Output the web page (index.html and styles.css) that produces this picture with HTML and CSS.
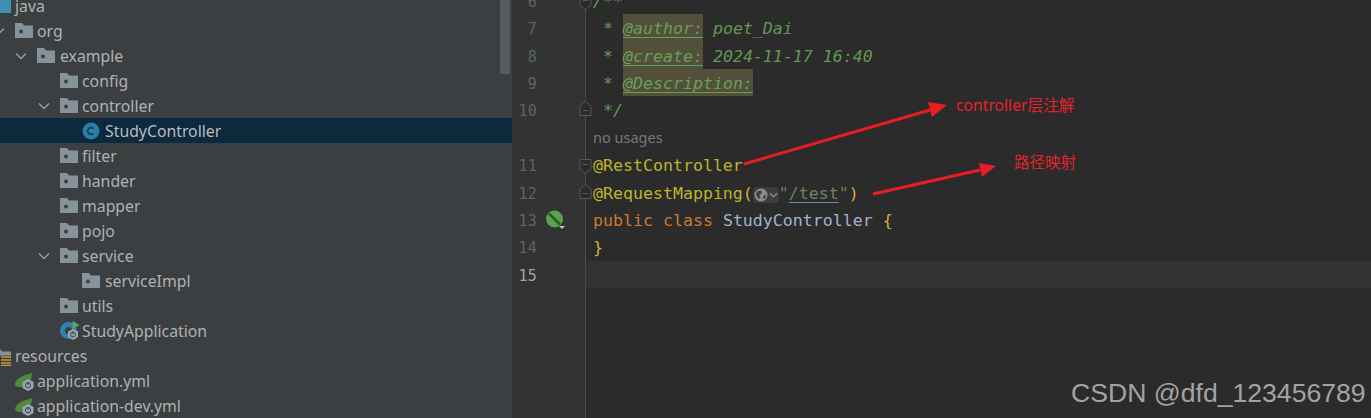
FILE: index.html
```html
<!DOCTYPE html>
<html lang="zh">
<head>
<meta charset="utf-8">
<title>StudyController</title>
<link rel="stylesheet" href="styles.css">
</head>
<body>
<svg class="defs" width="0" height="0">
  <symbol id="folder" viewBox="0 0 18 15">
    <path d="M0 0H7L9 2.5H18V15H0Z" fill="#87939a"/>
    <circle cx="6" cy="8.5" r="2" fill="#3c3f41"/>
  </symbol>
  <symbol id="chev" viewBox="0 0 12 8">
    <path d="M1 1.5L6 6.5L11 1.5" fill="none" stroke="#9da0a2" stroke-width="1.3"/>
  </symbol>
  <symbol id="cls" viewBox="0 0 18 18">
    <circle cx="9" cy="9" r="8.5" fill="#2a7ea6"/>
    <path d="M11.5 6.6A3.4 3.4 0 1 0 11.5 11.4" fill="none" stroke="#0f3f58" stroke-width="1.6"/>
  </symbol>
  <symbol id="app" viewBox="0 0 20 20">
    <circle cx="8.5" cy="9.5" r="8.5" fill="#2f83ab"/>
    <circle cx="8.5" cy="9.5" r="3.6" fill="#3c3f41"/>
    <path d="M12.5 0L19.5 4L12.5 8Z" fill="#59a869"/>
    <path d="M13 8L18 10.5V16L13 19L8 16V10.5Z" fill="#9aa7b0"/>
    <circle cx="13" cy="13.5" r="2.4" fill="none" stroke="#3c3f41" stroke-width="1"/>
    <path d="M13 10.5V13.5" stroke="#3c3f41" stroke-width="1"/>
  </symbol>
  <symbol id="yml" viewBox="0 0 19 18">
    <path d="M0 12C0 6 6 3 17 0C17 6 14 14 6 14C3 14 1 14 0 12Z" fill="#4f8a3c"/>
    <path d="M13 6L18.5 9V15L13 18L7.5 15V9Z" fill="#9aa7b0"/>
    <circle cx="13" cy="12.2" r="2.6" fill="none" stroke="#3c3f41" stroke-width="1"/>
    <path d="M13 9V12.2" stroke="#3c3f41" stroke-width="1"/>
  </symbol>
  <symbol id="res" viewBox="0 0 18 17">
    <path d="M0 0H7L9 2.5H18V12H0Z" fill="#87939a"/>
    <path d="M7 6.5H18V17H7Z" fill="#3c3f41"/>
    <path d="M8 8H18M8 11H18M8 14H18M8 16.5H18" stroke="#c79a3c" stroke-width="1.6"/>
  </symbol>
  <symbol id="java" viewBox="0 0 18 15">
    <path d="M0 0H7L9 2H18V15H0Z" fill="#3f8fb3"/>
  </symbol>
  <symbol id="foldopen" viewBox="0 0 13 15">
    <path d="M1 14.5V5L6.5 .5L12 5V14.5ZM3.5 9.5H9.5" fill="#2b2b2b" stroke="#555759"/>
  </symbol>
  <symbol id="foldclose" viewBox="0 0 13 15">
    <path d="M1 .5V10L6.5 14.5L12 10V.5ZM3.5 5.5H9.5" fill="#2b2b2b" stroke="#555759"/>
  </symbol>
</svg>

<div class="app">
  <aside class="sidebar">
    <div class="tree">
      <div class="node"><div class="in l0"><span class="ch"></span><svg class="ic"><use href="#java"/></svg><span class="lb">java</span></div></div>
      <div class="node"><div class="in l1"><svg class="ch"><use href="#chev"/></svg><svg class="ic"><use href="#folder"/></svg><span class="lb">org</span></div></div>
      <div class="node"><div class="in l2"><svg class="ch"><use href="#chev"/></svg><svg class="ic"><use href="#folder"/></svg><span class="lb">example</span></div></div>
      <div class="node"><div class="in l3"><span class="ch"></span><svg class="ic"><use href="#folder"/></svg><span class="lb">config</span></div></div>
      <div class="node"><div class="in l3"><svg class="ch"><use href="#chev"/></svg><svg class="ic"><use href="#folder"/></svg><span class="lb">controller</span></div></div>
      <div class="node selected"><div class="in l4"><span class="ch"></span><svg class="ic ic-c"><use href="#cls"/></svg><span class="lb">StudyController</span></div></div>
      <div class="node"><div class="in l3"><span class="ch"></span><svg class="ic"><use href="#folder"/></svg><span class="lb">filter</span></div></div>
      <div class="node"><div class="in l3"><span class="ch"></span><svg class="ic"><use href="#folder"/></svg><span class="lb">hander</span></div></div>
      <div class="node"><div class="in l3"><span class="ch"></span><svg class="ic"><use href="#folder"/></svg><span class="lb">mapper</span></div></div>
      <div class="node"><div class="in l3"><span class="ch"></span><svg class="ic"><use href="#folder"/></svg><span class="lb">pojo</span></div></div>
      <div class="node"><div class="in l3"><svg class="ch"><use href="#chev"/></svg><svg class="ic"><use href="#folder"/></svg><span class="lb">service</span></div></div>
      <div class="node"><div class="in l4"><span class="ch"></span><svg class="ic"><use href="#folder"/></svg><span class="lb">serviceImpl</span></div></div>
      <div class="node"><div class="in l3"><span class="ch"></span><svg class="ic"><use href="#folder"/></svg><span class="lb">utils</span></div></div>
      <div class="node"><div class="in l3"><span class="ch"></span><svg class="ic ic-app"><use href="#app"/></svg><span class="lb">StudyApplication</span></div></div>
      <div class="node"><div class="in l0"><span class="ch"></span><svg class="ic ic-res"><use href="#res"/></svg><span class="lb">resources</span></div></div>
      <div class="node"><div class="in l1"><span class="ch"></span><svg class="ic ic-yml"><use href="#yml"/></svg><span class="lb">application.yml</span></div></div>
      <div class="node"><div class="in l1"><span class="ch"></span><svg class="ic ic-yml"><use href="#yml"/></svg><span class="lb">application-dev.yml</span></div></div>
    </div>
    <div class="scrollthumb"></div>
  </aside>

  <main class="editor">
    <div class="lines">
      <div class="row"><div class="gut">6<svg class="fold fold-c"><use href="#foldclose"/></svg></div><div class="code cm">/**</div></div>
      <div class="row"><div class="gut">7</div><div class="code cm"> * <span class="tag">@author:</span> poet_Dai</div></div>
      <div class="row"><div class="gut">8</div><div class="code cm"> * <span class="tag">@create:</span> 2024-11-17 16:40</div></div>
      <div class="row"><div class="gut">9</div><div class="code cm"> * <span class="tag">@Description:</span></div></div>
      <div class="row"><div class="gut">10<svg class="fold fold-o"><use href="#foldopen"/></svg></div><div class="code cm"> */</div></div>
      <div class="row"><div class="gut"></div><div class="code hint">no usages</div></div>
      <div class="row"><div class="gut">11<svg class="fold fold-c"><use href="#foldclose"/></svg></div><div class="code"><span class="ann">@RestController</span></div></div>
      <div class="row"><div class="gut">12<svg class="fold fold-o"><use href="#foldopen"/></svg></div><div class="code"><span class="ann">@RequestMapping</span><span class="br">(</span><span class="inlay"><svg class="globe" viewBox="0 0 14 14"><circle cx="7" cy="7" r="6.5" fill="#8a8f94"/><path d="M3 3.5L7 2.5L8 5L5.5 7L6.5 10L4.5 11L2 7ZM9.5 7.5L12 7L11 10.5L9 11Z" fill="#3d3f40"/></svg><svg class="mini" viewBox="0 0 10 6"><path d="M1 1L5 5L9 1" fill="none" stroke="#8a8f94" stroke-width="1.4"/></svg></span><span class="str">"<span class="url">/test</span>"</span><span class="br">)</span></div></div>
      <div class="row"><div class="gut">13<svg class="bean" viewBox="0 0 20 20"><circle cx="9.5" cy="9" r="8.5" fill="#5aa34c"/><path d="M4 3.5L15 14.5" stroke="#2e5f28" stroke-width="2.6"/><path d="M14 16H20L17 19Z" fill="#c5c8ca"/></svg></div><div class="code"><span class="kw">public class</span> <span class="ty">StudyController</span> <span class="br">{</span></div></div>
      <div class="row"><div class="gut">14</div><div class="code"><span class="br">}</span></div></div>
      <div class="row current"><div class="gut">15</div><div class="code"></div></div>
      <div class="row filler"><div class="gut"></div><div class="code"></div></div>
    </div>
  </main>

  <svg class="arrows" viewBox="0 0 1371 418">
    <path d="M744 164L930 110" stroke="#ea1c24" stroke-width="3" fill="none"/>
    <path d="M947 105L928 102L932 117Z" fill="#ea1c24"/>
    <path d="M873 194L980 170" stroke="#ea1c24" stroke-width="3" fill="none"/>
    <path d="M996 166L979 163L982 177Z" fill="#ea1c24"/>
  </svg>
  <div class="note note-a">controller层注解</div>
  <div class="note note-b">路径映射</div>
  <div class="mark">CSDN @dfd_123456789</div>
</div>
</body>
</html>
```

FILE: styles.css
```css
* { box-sizing: border-box; }
html, body { margin: 0; padding: 0; background: #2b2b2b; }
.defs { position: absolute; }
.app {
  position: relative;
  display: flex;
  width: 1371px;
  height: 418px;
  overflow: hidden;
}
.sidebar {
  position: relative;
  flex: 0 0 512px;
  background: #3c3f41;
  overflow: hidden;
}
.tree { margin-top: -7px; }
.node {
  height: 25px;
  color: #afb1b3;
  font: 15.8px/25px "Noto Sans", sans-serif;
  white-space: nowrap;
}
.node.selected { background: #0d293e; color: #b8bcbe; }
.in { display: flex; align-items: center; height: 25px; }
.lb { padding-top: 2px; }
.l0 { margin-left: -29px; }
.l1 { margin-left: -7px; }
.l2 { margin-left: 15px; }
.l3 { margin-left: 38px; }
.l4 { margin-left: 60px; }
.ch { flex: 0 0 12px; width: 12px; height: 8px; margin-right: 10px; }
.ic { flex: 0 0 18px; width: 18px; height: 15px; margin-right: 4px; }
.l2 .ic, .l4 .ic { margin-right: 5px; }
.ic-c { height: 18px; }
.ic-app { width: 20px; flex-basis: 20px; height: 20px; margin-right: 2px; }
.ic-res { height: 17px; margin-top: 3px; }
.ic-yml { width: 19px; flex-basis: 19px; height: 18px; margin-right: 3px; margin-top: 2px; }
.scrollthumb {
  position: absolute;
  top: 0;
  left: 500px;
  width: 10px;
  height: 74px;
  background: #595b5d;
}

.editor { flex: 1; min-width: 0; }
.lines {
  display: flex;
  flex-direction: column;
  height: 431.2px;
  margin-top: -13.2px;
}
.row {
  display: grid;
  grid-template-columns: 74px 1fr;
  grid-template-rows: 27.4px;
  flex: 0 0 27.4px;
  height: 27.4px;
}
.row.filler { flex: 1; height: auto; grid-template-rows: 1fr; }
.gut {
  position: relative;
  padding-right: 48px;
  background: #313335;
  border-right: 1px solid #484a4b;
  color: #5f6365;
  text-align: right;
  font: 15px/30px "DejaVu Sans Mono", monospace;
  letter-spacing: .2px;
}
.current .gut { color: #a4a3a3; }
.current .code { background: #323232; }
.code {
  padding-left: 7px;
  color: #a9b7c6;
  font: 16.6px/30px "DejaVu Sans Mono", monospace;
  white-space: pre;
}
.cm { color: #629755; font-style: italic; }
.tag {
  display: inline-block;
  height: 27.4px;
  color: #689f5b;
  background: #52503a;
  text-decoration: underline;
  text-underline-offset: 3px;
}
.hint {
  color: #787878;
  font: 14.5px/27.4px "Noto Sans", sans-serif;
}
.ann { color: #bbb529; }
.br { color: #d7ae3f; }
.kw { color: #cc7832; }
.ty { color: #a0b4cc; }
.str { color: #6a8759; }
.url {
  text-decoration: underline;
  text-decoration-color: #6a8aa8;
  text-underline-offset: 3px;
}
.inlay {
  display: inline-flex;
  align-items: center;
  justify-content: center;
  width: 26px;
  height: 16px;
  vertical-align: -3px;
  background: #3b3d3e;
  border-radius: 4px;
}
.globe { width: 14px; height: 14px; margin-right: 1px; }
.mini { width: 9px; height: 6px; }
.fold {
  position: absolute;
  right: -7px;
  width: 13px;
  height: 15px;
}
.fold-c { top: 8px; }
.fold-o { top: 5px; }
.bean {
  position: absolute;
  left: 33px;
  top: 4px;
  width: 20px;
  height: 20px;
}
.arrows {
  position: absolute;
  inset: 0;
  width: 1371px;
  height: 418px;
  pointer-events: none;
}
.note {
  position: absolute;
  color: #e4232b;
  font: 15.7px/20px "Noto Sans", "Noto Sans CJK SC", sans-serif;
  white-space: nowrap;
}
.note-a { left: 956px; top: 95px; }
.note-b { left: 1014px; top: 152px; font-size: 15.5px; }
.mark {
  position: absolute;
  left: 1071px;
  top: 378px;
  color: #a3a3a3;
  font: 26.6px/30px "Liberation Sans", sans-serif;
  white-space: nowrap;
}
```
